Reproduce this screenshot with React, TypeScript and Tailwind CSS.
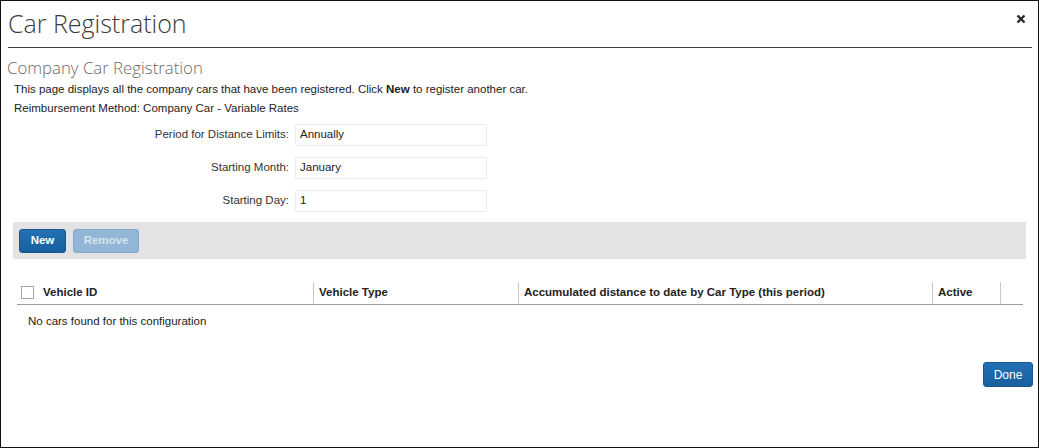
import React from "react";

const arial = { fontFamily: '"Liberation Sans", Arial, sans-serif' };
const open = { fontFamily: '"Open Sans", sans-serif' };

function Field({ label, value }: { label: string; value: string }) {
  return (
    <div className="flex items-center h-[22px]">
      <div className="w-[294px] text-right text-[11.5px] text-[#333] pr-[6px]">{label}</div>
      <div className="w-[192px] h-[22px] border border-[#ececec] rounded-[2px] flex items-center pl-[4px] text-[11.5px] text-[#222]">
        {value}
      </div>
    </div>
  );
}

export default function App() {
  return (
    <div className="w-[1039px] h-[448px] bg-white border border-[#111] flex flex-col relative" style={arial}>
      <div className="absolute right-[12px] top-[13px] text-[#333]">
        <svg width="10" height="10" viewBox="0 0 10 10">
          <path d="M1.5 1.5 L8.5 8.5 M8.5 1.5 L1.5 8.5" stroke="#2b2b2b" strokeWidth="2.4" strokeLinecap="butt" />
        </svg>
      </div>
      <div className="pl-[7px] pt-[4px] h-[46px] flex items-start">
        <div className="text-[25px] leading-[36px] text-[#3a3a3a] font-light" style={open}>Car Registration</div>
      </div>
      <div className="mx-[7px] mr-[6px] h-[1px] bg-[#3c3c3c]" />
      <div className="pl-[6px] pt-[9px] text-[16.8px] leading-[22px] text-[#6a6a6a] font-light" style={open}>
        Company Car Registration
      </div>
      <div className="pl-[13px] pt-[1px] text-[11.5px] leading-[18px] text-[#222]">
        This page displays all the company cars that have been registered. Click <b>New</b> to register another car.
      </div>
      <div className="pl-[13px] pt-[1px] text-[11.5px] leading-[18px] text-[#222]">Reimbursement Method: Company Car - Variable Rates</div>
      <div className="flex flex-col gap-[11px] pt-[7px] pl-[0px]">
        <Field label="Period for Distance Limits:" value="Annually" />
        <Field label="Starting Month:" value="January" />
        <Field label="Starting Day:" value="1" />
      </div>
      <div className="mt-[10px] ml-[12px] w-[1013px] h-[37px] bg-[#e3e3e3] flex items-center gap-[7px] pl-[6px]">
        <button className="h-[24px] w-[47px] rounded-[3px] bg-gradient-to-b from-[#2271b3] to-[#175fa0] border border-[#14578f] text-white text-[11.5px] font-bold">
          New
        </button>
        <button className="h-[24px] w-[66px] rounded-[3px] bg-[#93b5d6] border border-[#86a9cc] text-[#d6e3ef] text-[11.5px] font-bold">
          Remove
        </button>
      </div>
      <div className="mt-[23px] ml-[16px] w-[1006px]">
        <div className="flex h-[23px] border-b border-[#a0a0a0] text-[11.5px] font-bold text-[#222]">
          <div className="w-[296px] flex items-center pl-[4px] pb-[1px]">
            <div className="w-[13px] h-[13px] border border-[#a5a5a5] bg-white mr-[9px]" />
            Vehicle ID
          </div>
          <div className="w-[205px] border-l border-[#c8c8c8] flex items-center pl-[5px] pb-[1px]">Vehicle Type</div>
          <div className="w-[414px] border-l border-[#c8c8c8] flex items-center pl-[5px] pb-[1px]">
            Accumulated distance to date by Car Type (this period)
          </div>
          <div className="w-[68px] border-l border-[#c8c8c8] flex items-center pl-[5px] pb-[1px]">Active</div>
          <div className="border-l border-[#c8c8c8]" />
        </div>
        <div className="pl-[11px] pt-[8px] text-[11.5px] text-[#222]">No cars found for this configuration</div>
      </div>
      <div className="flex justify-end pr-[5px] mt-[32px]">
        <button className="h-[25px] w-[50px] rounded-[3px] bg-gradient-to-b from-[#2271b3] to-[#175fa0] border border-[#14578f] text-white text-[12px]">
          Done
        </button>
      </div>
    </div>
  );
}
